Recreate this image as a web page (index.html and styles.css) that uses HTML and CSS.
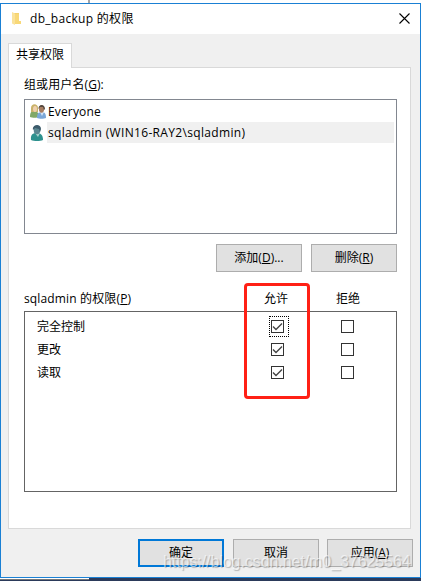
FILE: index.html
```html
<!DOCTYPE html>
<html lang="zh-CN">
<head>
  <meta charset="UTF-8">
  <meta name="viewport" content="width=device-width, initial-scale=1.0">
  <title>db_backup 的权限</title>
  <link rel="stylesheet" href="styles.css">
</head>
<body>

  <div class="desktop-top"></div>

  <div class="dialog">
    <!-- Title bar -->
    <div class="title-bar">
      <svg class="folder-icon" width="10" height="14" viewBox="0 0 10 14">
        <path d="M0 1h7v8h2v3H2z" fill="#f0cb67"/>
        <path d="M0 0l3 1.5V13L0 11.5z" fill="#fae29b"/>
        <path d="M3 1.5h4V9h2v3H3z" fill="#f8d878"/>
      </svg>
      <span class="title">db_backup 的权限</span>
      <svg class="close-icon" width="11" height="11" viewBox="0 0 11 11">
        <path d="M.5.5l10 10M10.5.5l-10 10" stroke="#000" stroke-width="1.1"/>
      </svg>
    </div>

    <div class="content">
      <div class="tab">共享权限</div>

      <div class="panel">
        <div class="label">组或用户名(<u>G</u>):</div>

        <div class="user-list">
          <div class="user">
            <svg class="user-icon" width="17" height="16" viewBox="0 0 17 16">
              <path d="M0 13c0-4 1-6 4-6s5 2 5 6c-2 1-7 1-9 0z" fill="#82a866"/>
              <path d="M1 8V4c0-5 7-5 7 0v4z" fill="#c9b269"/>
              <ellipse cx="5" cy="5" rx="2" ry="3" fill="#efd0ae"/>
              <path d="M7 14c0-4 1-6 5-6 3 0 4 2 4 6-2 1-7 1-9 0z" fill="#7ba7d8"/>
              <path d="M10 8l2 4 2-4z" fill="#d5e5f5"/>
              <ellipse cx="11.5" cy="5" rx="2.6" ry="3.7" fill="#a77d61"/>
              <path d="M8.500 5c-.5-5 6.500-5.500 6.500 0l-1 1-1-3-3 0z" fill="#54483f"/>
            </svg>
            <span class="user-name everyone">Everyone</span>
          </div>
          <div class="user selected">
            <svg class="user-icon" width="17" height="16" viewBox="0 0 17 16">
              <path d="M2 15c-.5-5 1-7 6-7 4.500 0 6 3 6 7-3 1.300-9 1.300-12 0z" fill="#2e918e"/>
              <path d="M6 8l3 4 2-4z" fill="#a9d4d0"/>
              <ellipse cx="8" cy="5" rx="3.3" ry="4.300" fill="#5b8791"/>
              <path d="M4 5C2.500-.8 12-2 12 4l-1 3-1-3-4-1z" fill="#3c5b6b"/>
            </svg>
            <span class="user-name account">sqladmin (WIN16-RAY2\sqladmin)</span>
          </div>
        </div>

        <div class="list-buttons">
          <button>添加(<u>D</u>)...</button>
          <button>删除(<u>R</u>)</button>
        </div>

        <!-- Permissions -->
        <div class="permission-header">
          <span class="permission-title">sqladmin 的权限(<u>P</u>)</span>
          <span class="column allow">允许</span>
          <span class="column">拒绝</span>
        </div>
        <div class="permission-list">
          <div class="permission">
            <span class="permission-name">完全控制</span>
            <span class="column"><span class="checkbox focused"><svg width="11" height="11" viewBox="0 0 11 11"><path d="M1 5.500l3 3 6-6"/></svg></span></span>
            <span class="column"><span class="checkbox"></span></span>
          </div>
          <div class="permission">
            <span class="permission-name">更改</span>
            <span class="column"><span class="checkbox"><svg width="11" height="11" viewBox="0 0 11 11"><path d="M1 5.500l3 3 6-6"/></svg></span></span>
            <span class="column"><span class="checkbox"></span></span>
          </div>
          <div class="permission">
            <span class="permission-name">读取</span>
            <span class="column"><span class="checkbox"><svg width="11" height="11" viewBox="0 0 11 11"><path d="M1 5.500l3 3 6-6"/></svg></span></span>
            <span class="column"><span class="checkbox"></span></span>
          </div>
        </div>
      </div>

      <div class="dialog-buttons">
        <button class="default">确定</button>
        <button class="cancel">取消</button>
        <button>应用(<u>A</u>)</button>
      </div>
    </div>
  </div>

  <div class="desktop-bottom">
    <div class="window-edge"></div>
  </div>

  <div class="highlight"></div>
  <div class="watermark">https://blog.csdn.net/m0_37625564</div>

</body>
</html>
```
FILE: styles.css
```css
* {
  margin: 0;
  padding: 0;
  box-sizing: border-box;
}

body {
  width: 421px;
  height: 581px;
  position: relative;
  overflow: hidden;
  background-color: #fff;
  font-family: 'Open Sans', 'Noto Sans CJK SC', sans-serif;
  font-size: 12px;
  line-height: 18px;
  color: #000;
}

u {
  text-underline-offset: 1px;
  text-decoration-thickness: 1px;
}

.desktop-top {
  width: 90px;
  height: 3px;
  border-right: 2px solid #a5a5a5;
}

.dialog {
  height: 575px;
  border: 1px solid #1a80d4;
  background-color: #f0f0f0;
}

.title-bar {
  display: flex;
  align-items: center;
  height: 30px;
  padding: 0 10px 0 11px;
  background-color: #fff;
}

.title {
  flex: 1;
  margin-left: 8px;
  letter-spacing: 0.3px;
}

.close-icon {
  margin-bottom: 2px;
}

.content {
  padding: 9px 7px 0;
}

.tab {
  position: relative;
  width: 64px;
  height: 25px;
  padding-left: 7px;
  line-height: 22px;
  border: 1px solid #d9d9d9;
  border-bottom: none;
  background-color: #fff;
}

.panel {
  height: 462px;
  width: 403px;
  margin-top: -1px;
  padding: 8px 13px 0 15px;
  border: 1px solid #d9d9d9;
  background-color: #fff;
}

.label {
  height: 23px;
  letter-spacing: 0.1px;
}

.user-list {
  width: 373px;
  height: 135px;
  padding: 1px;
  border: 1px solid #828790;
}

.user {
  display: flex;
  align-items: center;
  height: 21px;
  padding-left: 4px;
}

.user-icon {
  flex: none;
}

.user-name {
  flex: 1;
  height: 21px;
  margin-right: 1px;
  padding-left: 1px;
  line-height: 21px;
}

.everyone {
  letter-spacing: 0.15px;
}

.account {
  letter-spacing: 0.33px;
}

.selected .user-icon {
  margin-left: -1px;
  margin-right: 1px;
}

.selected .user-name {
  background-color: #f0f0f0;
}

.list-buttons {
  display: flex;
  justify-content: flex-end;
  gap: 9px;
  margin-top: 10px;
}

button {
  width: 86px;
  height: 28px;
  border: 1px solid #adadad;
  background-color: #e1e1e1;
  font-family: inherit;
  font-size: 12px;
  line-height: 18px;
  color: #000;
}

.permission-header {
  display: flex;
  height: 21px;
  margin: 18px 14px 0 0;
}

.permission-title {
  flex: 1;
  letter-spacing: 0.15px;
}

.column {
  display: flex;
  justify-content: center;
  width: 70px;
}

.allow {
  padding-right: 4px;
}

.permission-list {
  width: 373px;
  height: 181px;
  padding: 3px 14px 0 12px;
  border: 1px solid #646464;
}

.permission {
  display: flex;
  align-items: center;
  height: 23px;
}

.permission-name {
  flex: 1;
}

.checkbox {
  position: relative;
  width: 13px;
  height: 13px;
  border: 1px solid #333;
}

.checkbox svg {
  display: block;
  fill: none;
  stroke: #444;
  stroke-width: 1.4;
}

/* keyboard focus rectangle */
.focused::after {
  content: '';
  position: absolute;
  box-sizing: border-box;
  left: -3px;
  top: -5px;
  width: 20px;
  height: 21px;
  border: 1px dotted #000;
}

.dialog-buttons {
  display: flex;
  justify-content: flex-end;
  gap: 8px;
  margin-top: 10px;
}

.default {
  border: 2px solid #0078d7;
}

.cancel {
  margin-left: 1px;
}

.desktop-bottom {
  height: 3px;
  background-color: #2b3a5a;
}

.window-edge {
  width: 89px;
  height: 2px;
  border-top: 1px solid #fff;
  background-color: #777;
}

.highlight {
  position: absolute;
  left: 244px;
  top: 283px;
  width: 66px;
  height: 116px;
  border: 3px solid #ff2015;
  border-radius: 4px;
}

.watermark {
  position: absolute;
  left: 163px;
  top: 553px;
  font-family: 'Liberation Sans', Arial, sans-serif;
  font-size: 16px;
  line-height: 18px;
  letter-spacing: -0.07px;
  white-space: nowrap;
  color: rgba(255, 255, 255, 0.6);
  text-shadow: 1px 1px 1px rgba(0, 0, 0, 0.25);
}
```
